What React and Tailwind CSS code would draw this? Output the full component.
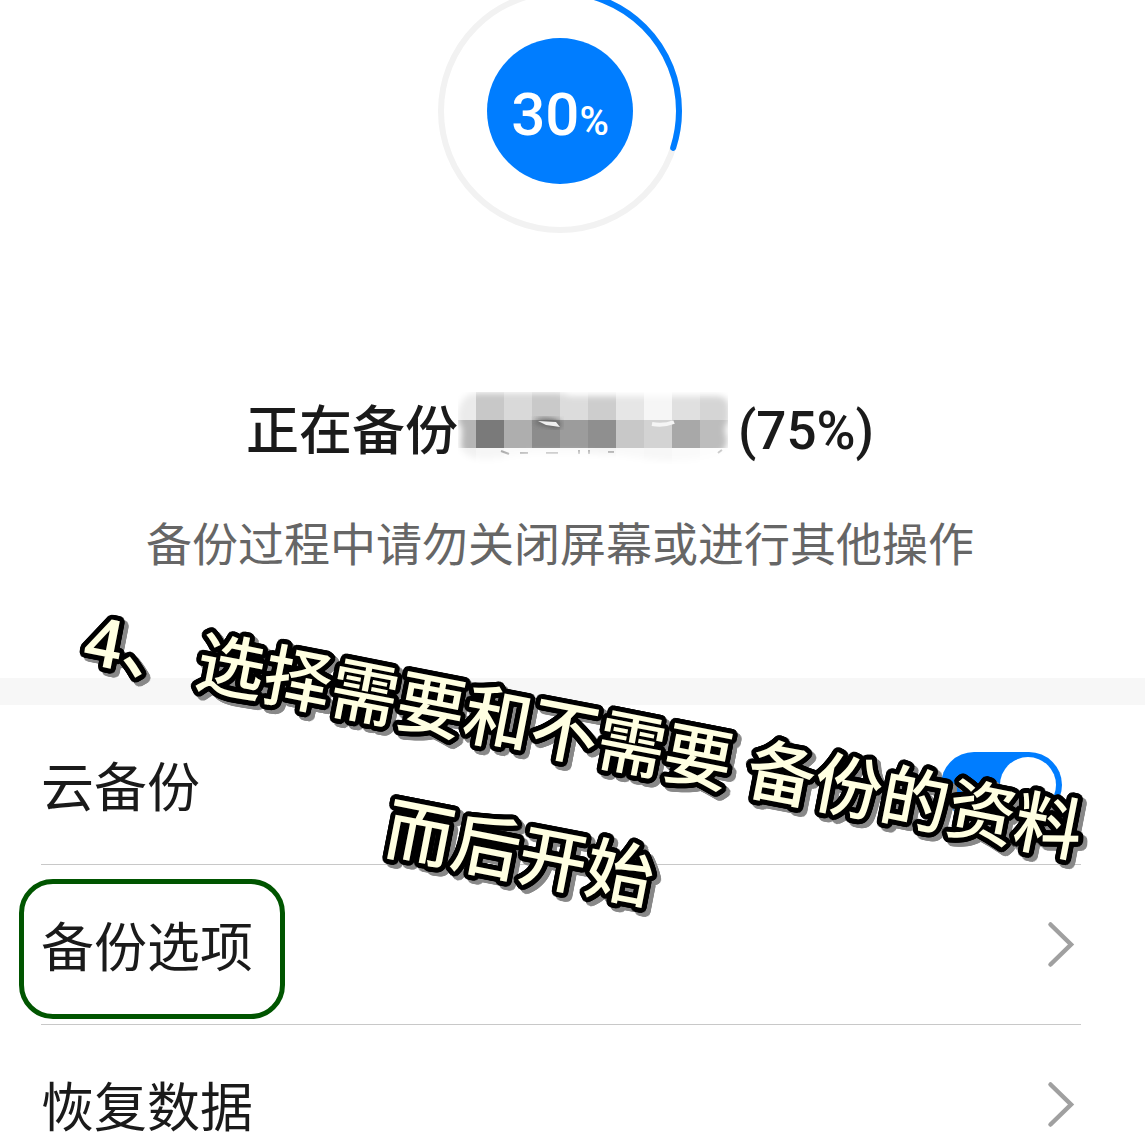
import { useState } from 'react'

const mosaic = [
    ['#ebebeb', '#c8c8c8', '#d9d9d9', '#c9c9c9', '#dcdcdc', '#cdcdcd', '#e6e6e6', '#f6f6f6', '#e0e0e0', '#d5d5d5'],
    ['#b6b6b6', '#7a7a7a', '#aeaeae', '#8c8c8c', '#9c9c9c', '#8f8f8f', '#c8c8c8', '#d3d3d3', '#a8a8a8', '#bdbdbd'],
    ['#f1f1f1', '#f6f6f6', '#fafafa', '#fafafa', '#fafafa', '#f4f4f4', '#f9f9f9', '#f7f7f7', '#fafafa', '#fdfdfd'],
]

// Round outline: black copies of the text on two circles around it
const outline = [3, 5]
    .flatMap((radius) =>
        Array.from({ length: 24 }, (_, i) => {
            const angle = (i * Math.PI) / 12
            return `${(radius * Math.cos(angle)).toFixed(2)}px ${(radius * Math.sin(angle)).toFixed(2)}px 0 #000`
        })
    )
    .join(', ')

const ProgressRing = ({ value }) => {
    const length = 2 * Math.PI * 119
    return (
        <div className="grid justify-items-center">
            {/* The top of the ring runs off the screen */}
            <svg className="col-start-1 row-start-1 w-[244px] h-[233px]" viewBox="0 11 244 233" fill="none" aria-hidden="true">
                <circle cx="122" cy="122" r="119" stroke="#f2f2f2" strokeWidth="6" />
                <circle
                    cx="122"
                    cy="122"
                    r="119"
                    stroke="#007dff"
                    strokeWidth="6"
                    strokeLinecap="round"
                    strokeDasharray={`${(length * value) / 100} ${length}`}
                    transform="rotate(-90 122 122)"
                />
            </svg>
            <div className="col-start-1 row-start-1 mt-[38px] w-[146px] h-[146px] rounded-full bg-[#007dff] text-white font-medium flex items-baseline justify-center leading-[154px]">
                <span className="text-[60px]">{value}</span>
                <span className="text-[40px]">%</span>
            </div>
        </div>
    )
}

// Censored app name
const Mosaic = () => (
    <svg className="w-[280px] h-[72px] shrink-0" viewBox="0 0 280 72" aria-hidden="true">
        <defs>
            <filter id="soft" x="-10%" y="-20%" width="120%" height="140%">
                <feGaussianBlur stdDeviation="3" />
            </filter>
            <mask id="brush">
                <g fill="#fff" filter="url(#soft)">
                    <path d="M18 1H98Q106 1 112 4H258Q271 4 271 16V29Q264 36 269 46Q270 58 260 62Q225 72 190 67L160 63L120 61H75L40 66Q10 70 3 56L4 36Q-3 28 2 14Q6 2 18 1Z" />
                </g>
            </mask>
        </defs>
        <g mask="url(#brush)">
            {mosaic.map((row, y) =>
                row.map((color, x) => (
                    <rect key={`${x}-${y}`} x={x * 28 - 10} y={y * 28} width="28" height="28" fill={color} shapeRendering="crispEdges" />
                ))
            )}
            <path d="M76 30Q82 24 100 29Q106 32 100 36Q90 34 76 30Z" fill="#555" filter="url(#soft)" />
            <path d="M80 29L98 30L102 35L88 33Z" fill="#eee" />
            <path d="M194 32Q206 34 216 30" stroke="#f5f5f5" strokeWidth="4" fill="none" />
            <path d="M43 59l8 3M62 61h8M88 61h12M121 58v4M131 58v4M150 60h6M260 61l4-3" stroke="#aaa" strokeWidth="2" />
        </g>
    </svg>
)

const Chevron = () => (
    <svg className="w-[34px] h-[48px]" viewBox="0 0 34 48" fill="none" stroke="#a0a0a0" strokeWidth="4.5" strokeLinecap="round" strokeLinejoin="miter" aria-hidden="true">
        <path d="M3.5 3.5L24 23.5L3.5 43.5" />
    </svg>
)

const App = () => {
    const [cloudBackup, setCloudBackup] = useState(true)

    return (
        <main className="relative h-screen overflow-hidden bg-white text-[#1a1a1a] font-[Roboto,'Noto_Sans_CJK_SC',sans-serif]">
            {/* Progress */}
            <section className="h-[678px] pr-[25px] flex flex-col items-center">
                <ProgressRing value={30} />
                <h1 className="mt-[159px] h-[72px] flex items-center text-[53px] font-medium whitespace-nowrap">
                    <span className="pt-2.5">正在备份</span>
                    <Mosaic />
                    <span className="pt-2">(75%)</span>
                </h1>
                <p className="mt-[49px] text-[46px] leading-[64px] text-[#666] whitespace-nowrap">
                    备份过程中请勿关闭屏幕或进行其他操作
                </p>
            </section>

            <div className="h-[27px] bg-[#f7f7f7]" />

            {/* Settings */}
            <ul className="pl-[41px] pr-16 text-[53px]">
                <li className="h-40 border-b border-[#c8c8c8]">
                    <label className="h-full flex items-center justify-between pr-[19px]">
                        <span className="pt-2.5">云备份</span>
                        <span className="grid items-center">
                            <input
                                type="checkbox"
                                role="switch"
                                checked={cloudBackup}
                                onChange={(e) => setCloudBackup(e.target.checked)}
                                className="peer appearance-none col-start-1 row-start-1 w-[121px] h-[66px] rounded-full bg-[#d0d0d0] checked:bg-[#007dff]"
                            />
                            <span className="pointer-events-none col-start-1 row-start-1 ml-[5px] w-14 h-14 rounded-full bg-white peer-checked:ml-[59px]" />
                        </span>
                    </label>
                </li>
                <li className="relative h-40 border-b border-[#c8c8c8]">
                    <button type="button" className="w-full h-full flex items-center justify-between">
                        <span className="pt-2.5">备份选项</span>
                        <Chevron />
                    </button>
                    <div className="pointer-events-none absolute -left-[22px] top-[14px] w-[266px] h-[140px] rounded-[34px] border-5 border-[#005500]" />
                </li>
                <li className="h-40">
                    <button type="button" className="w-full h-full flex items-center justify-between">
                        <span className="pt-2.5">恢复数据</span>
                        <Chevron />
                    </button>
                </li>
            </ul>

            {/* Tutorial caption */}
            <div className="pointer-events-none absolute left-[46px] top-[672px] w-[1050px] drop-shadow-[4px_4px_0_#888]">
                <div
                    className="rotate-11 text-center text-[68px] leading-[128px] font-medium text-[#ffffe1] whitespace-nowrap"
                    style={{ textShadow: outline }}
                >
                    <p><span className="mr-2">4、</span>选择需要和不需要 备份的资料</p>
                    <p className="pr-20">而后开始</p>
                </div>
            </div>
        </main>
    )
}

export default App
